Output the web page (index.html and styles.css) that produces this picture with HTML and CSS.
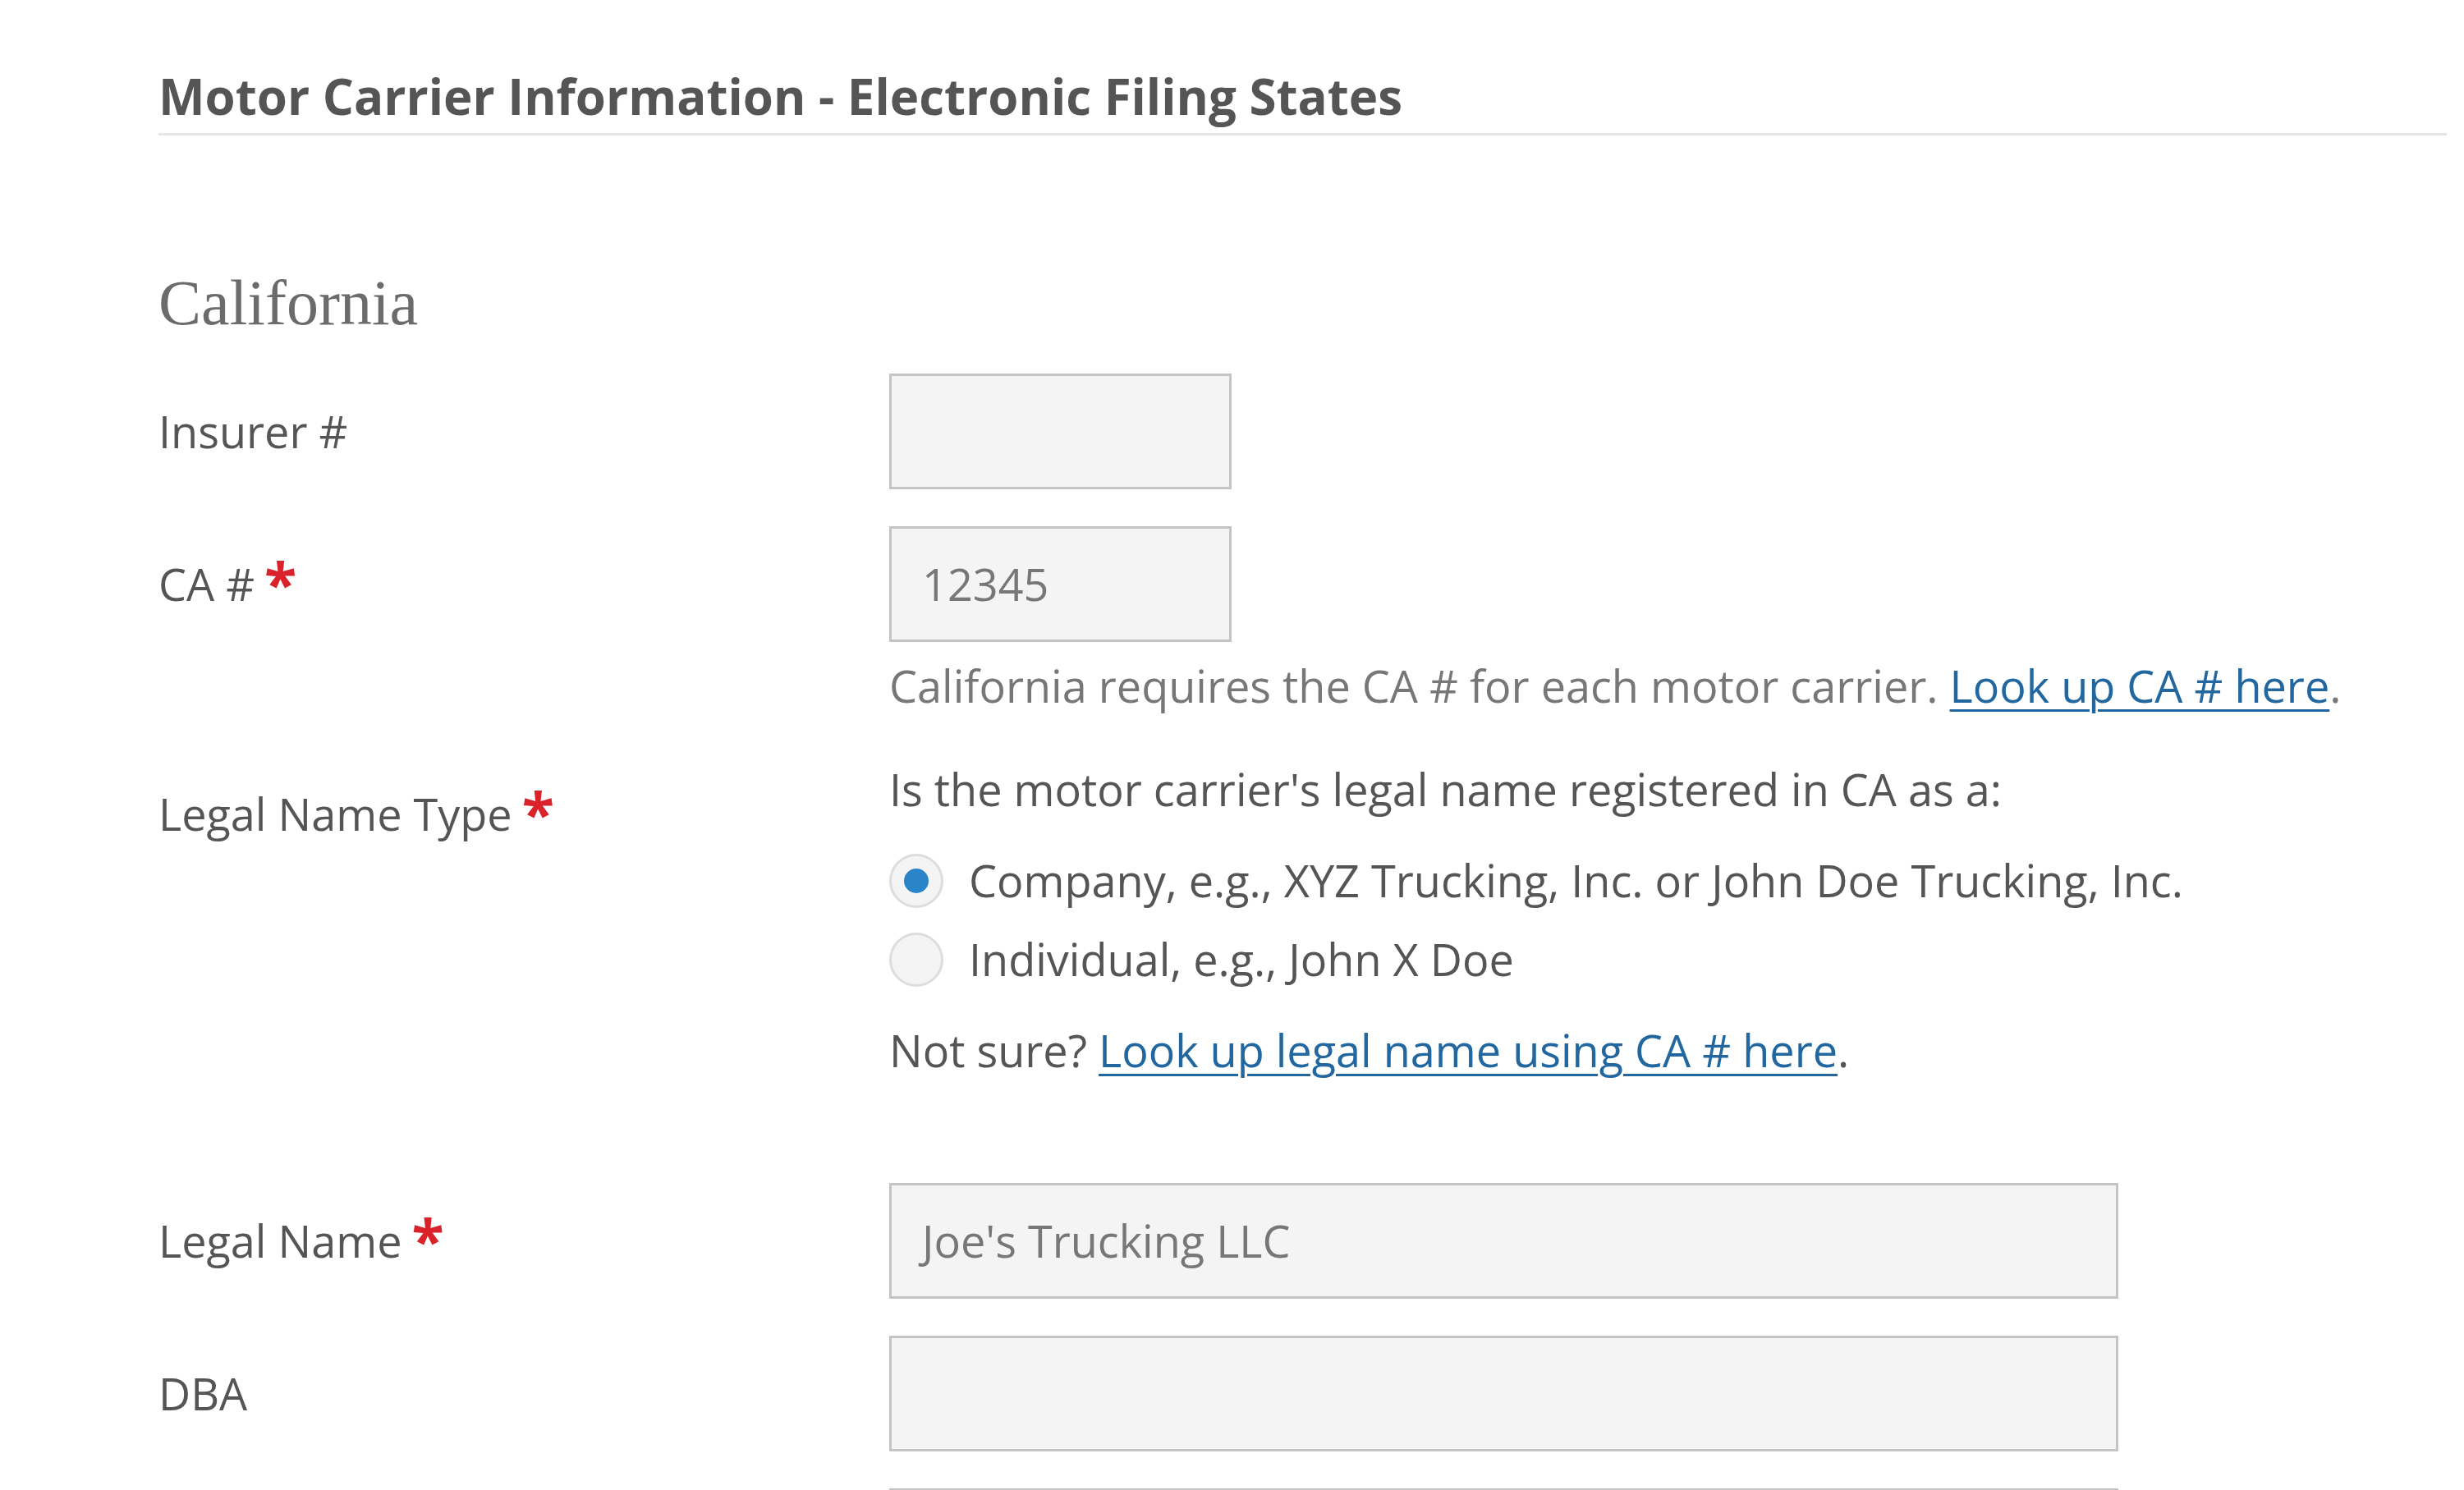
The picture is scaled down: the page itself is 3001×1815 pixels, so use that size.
FILE: index.html
```html
<!DOCTYPE html>
<html lang="en">
<head>
<meta charset="utf-8">
<title>Motor Carrier Information</title>
<link rel="stylesheet" href="styles.css">
</head>
<body>
<div class="page">
  <h2 class="section-title">Motor Carrier Information - Electronic Filing States</h2>

  <h3 class="state-title">California</h3>

  <div class="form-row">
    <label class="field-label">Insurer #</label>
    <div class="field">
      <div class="text-input short"></div>
    </div>
  </div>

  <div class="form-row">
    <label class="field-label">CA #<span class="req">*</span></label>
    <div class="field">
      <div class="text-input short">12345</div>
    </div>
  </div>
  <p class="help">California requires the CA # for each motor carrier. <a href="#">Look up CA # here</a>.</p>

  <div class="form-row top">
    <label class="field-label offset">Legal Name Type<span class="req">*</span></label>
    <div class="field">
      <p class="question">Is the motor carrier's legal name registered in CA as a:</p>
      <div class="radio-group">
        <div class="radio-option"><span class="radio checked"></span><span>Company, e.g., XYZ Trucking, Inc. or John Doe Trucking, Inc.</span></div>
        <div class="radio-option"><span class="radio"></span><span>Individual, e.g., John X Doe</span></div>
      </div>
      <p class="not-sure">Not sure? <a href="#">Look up legal name using CA # here</a>.</p>
    </div>
  </div>

  <div class="form-row legal">
    <label class="field-label">Legal Name<span class="req">*</span></label>
    <div class="field">
      <div class="text-input wide">Joe's Trucking LLC</div>
    </div>
  </div>

  <div class="form-row">
    <label class="field-label">DBA</label>
    <div class="field">
      <div class="text-input wide"></div>
    </div>
  </div>

  <div class="form-row">
    <label class="field-label"></label>
    <div class="field">
      <div class="text-input wide"></div>
    </div>
  </div>
</div>
</body>
</html>
```

FILE: styles.css
```css
html, body {
  margin: 0;
  padding: 0;
  background: #ffffff;
}

body {
  font-family: "Open Sans", "Liberation Sans", sans-serif;
  font-size: 54px;
  color: #555555;
}

.page {
  padding: 81px 21px 0 193px;
}

.section-title {
  margin: 0;
  font-size: 60px;
  font-weight: 700;
  line-height: 72px;
  color: #555555;
  padding-bottom: 9px;
  border-bottom: 3px solid #e6e6e6;
}

.state-title {
  margin: 157px 0 0 0;
  font-family: "Liberation Serif", "DejaVu Serif", serif;
  font-weight: 400;
  font-size: 78px;
  line-height: 94px;
  color: #6b6b6b;
}

.form-row {
  display: flex;
  align-items: center;
  margin-top: 45px;
}

.state-title + .form-row {
  margin-top: 39px;
}

.form-row.top {
  align-items: flex-start;
  margin-top: 45px;
}

.form-row.legal {
  margin-top: 121px;
}

.field-label {
  width: 890px;
  flex: none;
  line-height: 81px;
  color: #555555;
}

.field-label.offset {
  padding-top: 30px;
}

.req {
  color: #d9222a;
  font-weight: 700;
  font-size: 72px;
  line-height: 0;
  margin-left: 12px;
  position: relative;
  top: 6px;
}

.field {
  flex: 1;
}

.text-input {
  box-sizing: border-box;
  height: 141px;
  border: 3px solid #c4c4c4;
  background: #f4f4f4;
  padding-left: 37px;
  display: flex;
  align-items: center;
  color: #777777;
  line-height: 81px;
}

.text-input.short {
  width: 417px;
}

.text-input.wide {
  width: 1497px;
}

.help {
  margin: 13px 0 0 890px;
  line-height: 81px;
  color: #777777;
}

a {
  color: #22679f;
  text-decoration: underline;
  text-decoration-thickness: 3px;
  text-underline-offset: 8px;
}

.question {
  margin: 0;
  line-height: 81px;
  color: #555555;
}

.radio-group {
  margin-top: 30px;
  display: flex;
  flex-direction: column;
  gap: 15px;
}

.radio-option {
  display: flex;
  align-items: center;
  gap: 31px;
  line-height: 81px;
}

.radio {
  box-sizing: border-box;
  width: 66px;
  height: 66px;
  border-radius: 50%;
  border: 3px solid #dddddd;
  background: #f4f4f4;
  display: flex;
  align-items: center;
  justify-content: center;
  flex: none;
}

.radio.checked::after {
  content: "";
  width: 30px;
  height: 30px;
  border-radius: 50%;
  background: #2a84c8;
}

.not-sure {
  margin: 30px 0 0 0;
  line-height: 81px;
  color: #555555;
}
```
